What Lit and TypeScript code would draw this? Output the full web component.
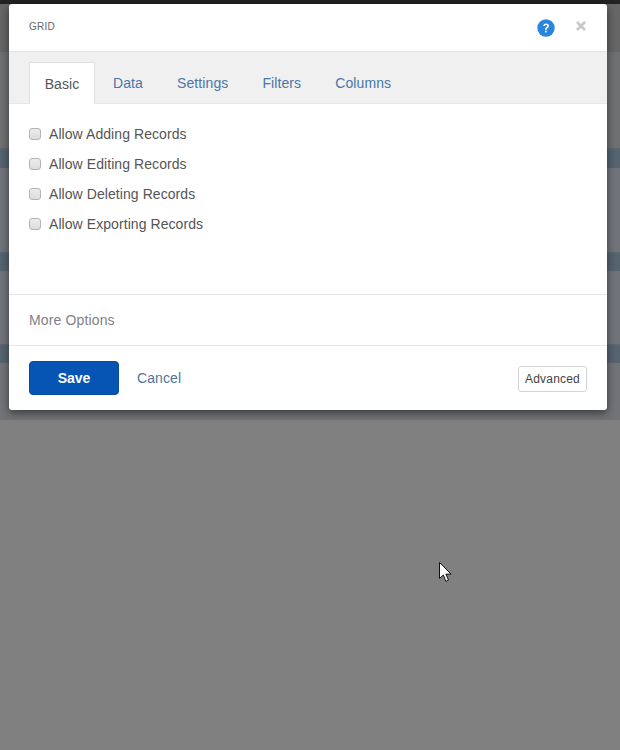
import { LitElement, html, css, svg } from "lit";
import { customElement } from "lit/decorators.js";

const TABS = ["Basic", "Data", "Settings", "Filters", "Columns"];
const OPTIONS = ["Allow Adding Records", "Allow Editing Records", "Allow Deleting Records", "Allow Exporting Records"];

@customElement("app-root")
export class AppRoot extends LitElement {
  static styles = css`
    :host {
      display: block;
      position: relative;
      width: 620px;
      height: 750px;
      overflow: hidden;
      font-family: "Liberation Sans", Arial, sans-serif;
      font-size: 14px;
      letter-spacing: 0.1px;
      padding-top: 4px;
      box-sizing: border-box;
      background:
        linear-gradient(#222222 0 4px, transparent 4px),
        linear-gradient(
          #666666 0 52px,
          #6f7072 52px 148px,
          #5c6670 148px 150px,
          #566470 150px 168px,
          #70747a 168px 252px,
          #5a6670 252px 254px,
          #566470 254px 271px,
          #70747a 271px 344px,
          #5a6a70 344px 346px,
          #566470 346px 363px,
          #717376 363px 420px,
          #808080 420px
        );
    }
    .modal {
      width: 598px;
      height: 406px;
      margin-left: 9px;
      background: #fff;
      border-radius: 3px;
      box-shadow: 0 3px 9px rgba(0, 0, 0, 0.5);
      display: flex;
      flex-direction: column;
    }
    .header {
      height: 47px;
      flex: none;
      box-sizing: border-box;
      padding: 0 20px;
      display: flex;
      align-items: center;
      justify-content: space-between;
    }
    .title {
      font-size: 10px;
      letter-spacing: 0.2px;
      color: #666;
      margin-bottom: 3px;
    }
    .header-icons {
      display: flex;
      align-items: center;
      gap: 20px;
    }
    .header-icons svg { display: block; }
    .close { margin-bottom: 3px; }
    .tabs {
      height: 53px;
      flex: none;
      box-sizing: border-box;
      background: #f0f0f0;
      border-top: 1px solid #e4e4e4;
      border-bottom: 1px solid #e6e6e6;
      padding: 10px 0 0 20px;
      display: flex;
      align-items: stretch;
    }
    .tab {
      box-sizing: border-box;
      color: #4a76a8;
      display: flex;
      align-items: center;
      padding: 1px 17px 0;
    }
    .tab.active {
      width: 66px;
      justify-content: center;
      padding: 1px 0 0;
      margin: 0 1px -1px 0;
      background: #fff;
      color: #555;
      border: 1px solid #e0e0e0;
      border-bottom: 0;
      border-radius: 2px 2px 0 0;
    }
    .options {
      height: 190px;
      flex: none;
      box-sizing: border-box;
      padding: 20px 0 0 20px;
      display: flex;
      flex-direction: column;
      gap: 10px;
    }
    .option {
      height: 20px;
      display: flex;
      align-items: center;
      color: #555;
      letter-spacing: 0.07px;
    }
    .check {
      width: 12px;
      height: 12px;
      box-sizing: border-box;
      border: 1px solid #b4b4b4;
      border-radius: 3px;
      background: linear-gradient(#ececec, #dcdcdc);
      margin-right: 8px;
      flex: none;
    }
    .more {
      height: 52px;
      flex: none;
      box-sizing: border-box;
      border-top: 1px solid #e6e6e6;
      border-bottom: 1px solid #e6e6e6;
      padding-left: 20px;
      display: flex;
      align-items: center;
      color: #7f7f86;
      letter-spacing: 0.14px;
    }
    .footer {
      flex: 1;
      box-sizing: border-box;
      padding: 0 20px;
      display: flex;
      align-items: center;
    }
    .save {
      width: 90px;
      height: 34px;
      box-sizing: border-box;
      background: #0654b4;
      border: 1px solid #0a4a9a;
      border-radius: 4px;
      color: #fff;
      font: bold 14px "Liberation Sans", Arial, sans-serif;
      padding: 0;
    }
    .cancel {
      margin-left: 18px;
      color: #4f729c;
    }
    .advanced {
      margin: 2px 0 0 auto;
      width: 69px;
      height: 26px;
      box-sizing: border-box;
      background: #fff;
      border: 1px solid #d4d4d4;
      border-radius: 3px;
      color: #444;
      font: 12px "Liberation Sans", Arial, sans-serif;
      letter-spacing: 0.2px;
      padding: 0;
    }
    .cursor {
      position: absolute;
      left: 439px;
      top: 562px;
      display: block;
    }
  `;

  render() {
    return html`
      <div class="modal">
        <div class="header">
          <span class="title">GRID</span>
          <div class="header-icons">
            <svg width="18" height="18" viewBox="0 0 18 18">
              <circle cx="9" cy="9" r="8.7" fill="#2a86dc"></circle>
              <path d="M6.2 7.1C6.3 5.3 7.5 4.4 9.1 4.4c1.7 0 2.9 1 2.9 2.4 0 1.2-.7 1.8-1.5 2.4-.7.5-.9.8-.9 1.6H8c0-1.3.4-1.9 1.2-2.5.7-.5 1-.8 1-1.4 0-.6-.5-1-1.1-1-.7 0-1.2.4-1.3 1.2z" fill="#fff"></path>
              <rect x="8" y="11.6" width="1.7" height="1.8" fill="#fff"></rect>
            </svg>
            <svg class="close" width="12" height="12" viewBox="0 0 12 12">
              <path d="M2 2l8 8M10 2l-8 8" stroke="#c8c8c8" stroke-width="2.6" fill="none"></path>
            </svg>
          </div>
        </div>
        <div class="tabs">
          ${TABS.map((t) => html`<div class="tab ${t === "Basic" ? "active" : ""}">${t}</div>`)}
        </div>
        <div class="options">
          ${OPTIONS.map((o) => html`<div class="option"><span class="check"></span>${o}</div>`)}
        </div>
        <div class="more">More Options</div>
        <div class="footer">
          <button class="save">Save</button>
          <span class="cancel">Cancel</span>
          <button class="advanced">Advanced</button>
        </div>
      </div>
      <svg class="cursor" width="14" height="21" viewBox="0 0 14 21">
        ${svg`<path d="M.5.5v16l3.8-3.5 2.6 6.3 2.6-1.1-2.6-6.1h5.2z" fill="#fff" stroke="#111" stroke-width="1"></path>`}
      </svg>
    `;
  }
}
